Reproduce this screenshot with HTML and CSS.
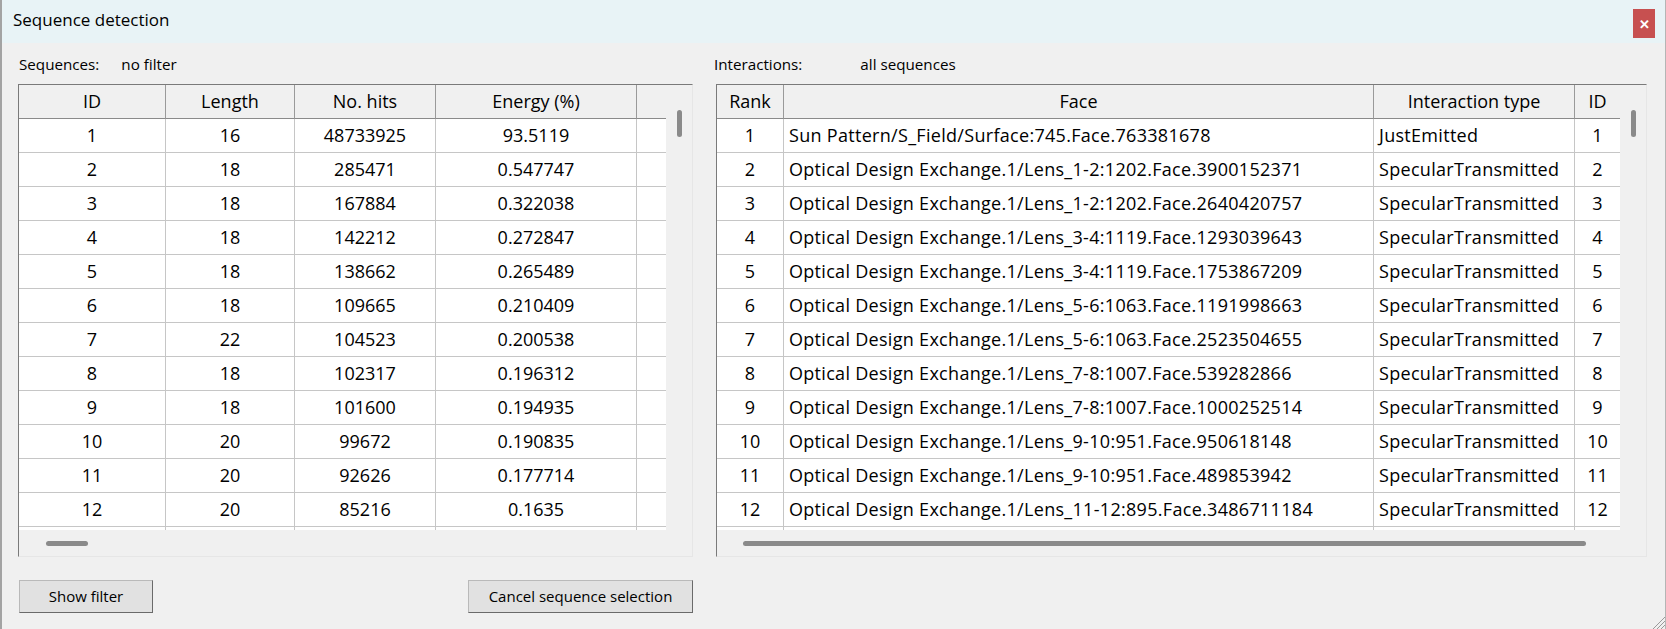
FILE: index.html
```html
<!DOCTYPE html>
<html>
<head>
<meta charset="utf-8">
<link rel="stylesheet" href="styles.css">
</head>
<body>
<div class="window">
  <div class="titlebar">
    <span class="title">Sequence detection</span>
    <span class="close">✕</span>
  </div>
  <div class="content">
    <div class="panel">
      <div class="caption"><span class="cap-key">Sequences:</span><span class="cap-val seq">no filter</span></div>
      <div class="box">
        <div class="grid-area left-cols">
          <div class="row head"><div>ID</div><div>Length</div><div>No. hits</div><div>Energy (%)</div><div class="last"></div></div>
          <div class="row"><div>1</div><div>16</div><div>48733925</div><div>93.5119</div><div class="last"></div></div>
          <div class="row"><div>2</div><div>18</div><div>285471</div><div>0.547747</div><div class="last"></div></div>
          <div class="row"><div>3</div><div>18</div><div>167884</div><div>0.322038</div><div class="last"></div></div>
          <div class="row"><div>4</div><div>18</div><div>142212</div><div>0.272847</div><div class="last"></div></div>
          <div class="row"><div>5</div><div>18</div><div>138662</div><div>0.265489</div><div class="last"></div></div>
          <div class="row"><div>6</div><div>18</div><div>109665</div><div>0.210409</div><div class="last"></div></div>
          <div class="row"><div>7</div><div>22</div><div>104523</div><div>0.200538</div><div class="last"></div></div>
          <div class="row"><div>8</div><div>18</div><div>102317</div><div>0.196312</div><div class="last"></div></div>
          <div class="row"><div>9</div><div>18</div><div>101600</div><div>0.194935</div><div class="last"></div></div>
          <div class="row"><div>10</div><div>20</div><div>99672</div><div>0.190835</div><div class="last"></div></div>
          <div class="row"><div>11</div><div>20</div><div>92626</div><div>0.177714</div><div class="last"></div></div>
          <div class="row"><div>12</div><div>20</div><div>85216</div><div>0.1635</div><div class="last"></div></div>
          <div class="row"><div></div><div></div><div></div><div></div><div class="last"></div></div>
        </div>
        <div class="vscroll"><span class="vthumb"></span></div>
        <div class="hscroll"><span class="hthumb short"></span></div>
        <div class="corner"></div>
      </div>
      <div class="buttons">
        <button class="btn btn-filter">Show filter</button>
        <button class="btn btn-cancel">Cancel sequence selection</button>
      </div>
    </div>
    <div class="panel">
      <div class="caption right"><span class="cap-key">Interactions:</span><span class="cap-val inter">all sequences</span></div>
      <div class="box wide">
        <div class="grid-area right-cols">
          <div class="row head"><div>Rank</div><div>Face</div><div>Interaction type</div><div class="last">ID</div></div>
          <div class="row"><div>1</div><div class="l">Sun Pattern/S_Field/Surface:745.Face.763381678</div><div class="l">JustEmitted</div><div class="last">1</div></div>
          <div class="row"><div>2</div><div class="l">Optical Design Exchange.1/Lens_1-2:1202.Face.3900152371</div><div class="l">SpecularTransmitted</div><div class="last">2</div></div>
          <div class="row"><div>3</div><div class="l">Optical Design Exchange.1/Lens_1-2:1202.Face.2640420757</div><div class="l">SpecularTransmitted</div><div class="last">3</div></div>
          <div class="row"><div>4</div><div class="l">Optical Design Exchange.1/Lens_3-4:1119.Face.1293039643</div><div class="l">SpecularTransmitted</div><div class="last">4</div></div>
          <div class="row"><div>5</div><div class="l">Optical Design Exchange.1/Lens_3-4:1119.Face.1753867209</div><div class="l">SpecularTransmitted</div><div class="last">5</div></div>
          <div class="row"><div>6</div><div class="l">Optical Design Exchange.1/Lens_5-6:1063.Face.1191998663</div><div class="l">SpecularTransmitted</div><div class="last">6</div></div>
          <div class="row"><div>7</div><div class="l">Optical Design Exchange.1/Lens_5-6:1063.Face.2523504655</div><div class="l">SpecularTransmitted</div><div class="last">7</div></div>
          <div class="row"><div>8</div><div class="l">Optical Design Exchange.1/Lens_7-8:1007.Face.539282866</div><div class="l">SpecularTransmitted</div><div class="last">8</div></div>
          <div class="row"><div>9</div><div class="l">Optical Design Exchange.1/Lens_7-8:1007.Face.1000252514</div><div class="l">SpecularTransmitted</div><div class="last">9</div></div>
          <div class="row"><div>10</div><div class="l">Optical Design Exchange.1/Lens_9-10:951.Face.950618148</div><div class="l">SpecularTransmitted</div><div class="last">10</div></div>
          <div class="row"><div>11</div><div class="l">Optical Design Exchange.1/Lens_9-10:951.Face.489853942</div><div class="l">SpecularTransmitted</div><div class="last">11</div></div>
          <div class="row"><div>12</div><div class="l">Optical Design Exchange.1/Lens_11-12:895.Face.3486711184</div><div class="l">SpecularTransmitted</div><div class="last">12</div></div>
          <div class="row"><div></div><div></div><div></div><div class="last"></div></div>
        </div>
        <div class="vscroll"><span class="vthumb"></span></div>
        <div class="hscroll"><span class="hthumb long"></span></div>
        <div class="corner"></div>
      </div>
    </div>
  </div>
  <svg class="grip" width="16" height="16" viewBox="0 0 16 16">
    <path d="M16 4 L4 16 M16 8 L8 16 M16 12 L12 16" stroke="#9a9a9a" stroke-width="1"/>
  </svg>
</div>
</body>
</html>
```

FILE: styles.css
```css
* { box-sizing: border-box; }
html, body { margin: 0; padding: 0; }
body {
  width: 1666px;
  height: 629px;
  overflow: hidden;
  background: #f0f0f0;
  font-family: "Open Sans", "Noto Sans", sans-serif;
  color: #000;
}
.window {
  position: relative;
  width: 1666px;
  height: 629px;
  background: #f0f0f0;
  border-left: 2px solid #a3a3a3;
  border-right: 1px solid #b5b5b5;
}
.titlebar {
  height: 43px;
  background: #e8f3f6;
  display: flex;
  align-items: flex-start;
  padding-left: 11px;
}
.title {
  font-size: 17px;
  line-height: 40px;
}
.close {
  margin-left: auto;
  margin-right: 10px;
  margin-top: 9px;
  width: 22px;
  height: 29px;
  background: #c75050;
  color: #fff;
  font-size: 13px;
  font-weight: bold;
  display: flex;
  align-items: center;
  justify-content: center;
}
.content {
  display: grid;
  grid-template-columns: 675px 931px;
  column-gap: 23px;
  padding-left: 16px;
}
.caption {
  height: 41px;
  display: flex;
  align-items: center;
  font-size: 15.2px;
  padding-left: 1px;
  padding-top: 1px;
}
.caption.right { padding-left: 0; margin-left: -2px; }
.cap-key { display: inline-block; }
.cap-val.seq { margin-left: 22px; }
.cap-val.inter { margin-left: 58px; }
.box {
  height: 473px;
  border: 1px solid;
  border-color: #7a7a7a #e6e6e6 #e6e6e6 #7a7a7a;
  display: grid;
  grid-template-columns: 647px 26px;
  grid-template-rows: 445px 26px;
  background: #f0f0f0;
}
.box.wide { grid-template-columns: 903px 26px; }
.grid-area {
  background: #fff;
  overflow: hidden;
  font-size: 18px;
}
.row {
  display: grid;
  height: 34px;
}
.left-cols .row { grid-template-columns: 147px 129px 141px 201px 29px; }
.right-cols .row { grid-template-columns: 67px 590px 201px 45px; }
.row > div {
  border-right: 1px solid #c6c6c6;
  border-bottom: 1px solid #c6c6c6;
  display: flex;
  align-items: center;
  justify-content: center;
  white-space: nowrap;
  overflow: hidden;
  padding-bottom: 1px;
}
.row > div.l { justify-content: flex-start; padding-left: 5px; letter-spacing: 0.3px; }
.row > div.last { border-right: none; }
.row.head > div {
  background: #f0f0f0;
  border-right-color: #9a9a9a;
  border-bottom-color: #8a8a8a;
}
.row.head > div.last { border-right: none; }
.vscroll {
  background: #f0f0f0;
  position: relative;
}
.vthumb {
  position: absolute;
  left: 11px;
  top: 25px;
  width: 5px;
  height: 27px;
  border-radius: 3px;
  background: #8a8a8a;
}
.hscroll {
  background: #f0f0f0;
  position: relative;
}
.hthumb {
  position: absolute;
  top: 11px;
  height: 5px;
  border-radius: 3px;
  background: #8a8a8a;
}
.hthumb.short { left: 27px; width: 42px; }
.hthumb.long { left: 26px; width: 843px; }
.corner { background: #f0f0f0; }
.buttons {
  display: flex;
  justify-content: space-between;
  margin-top: 23px;
  padding-left: 1px;
}
.btn {
  height: 33px;
  font-family: "Open Sans", "Noto Sans", sans-serif;
  font-size: 15px;
  color: #000;
  background: #e1e1e1;
  border: 1px solid;
  border-color: #b9b9b9 #6a6a6a #6a6a6a #b9b9b9;
  padding: 0 0 2px 0;
}
.btn-filter { width: 134px; }
.btn-cancel { width: 225px; }
.grip {
  position: absolute;
  right: 0;
  bottom: 0;
}
```
